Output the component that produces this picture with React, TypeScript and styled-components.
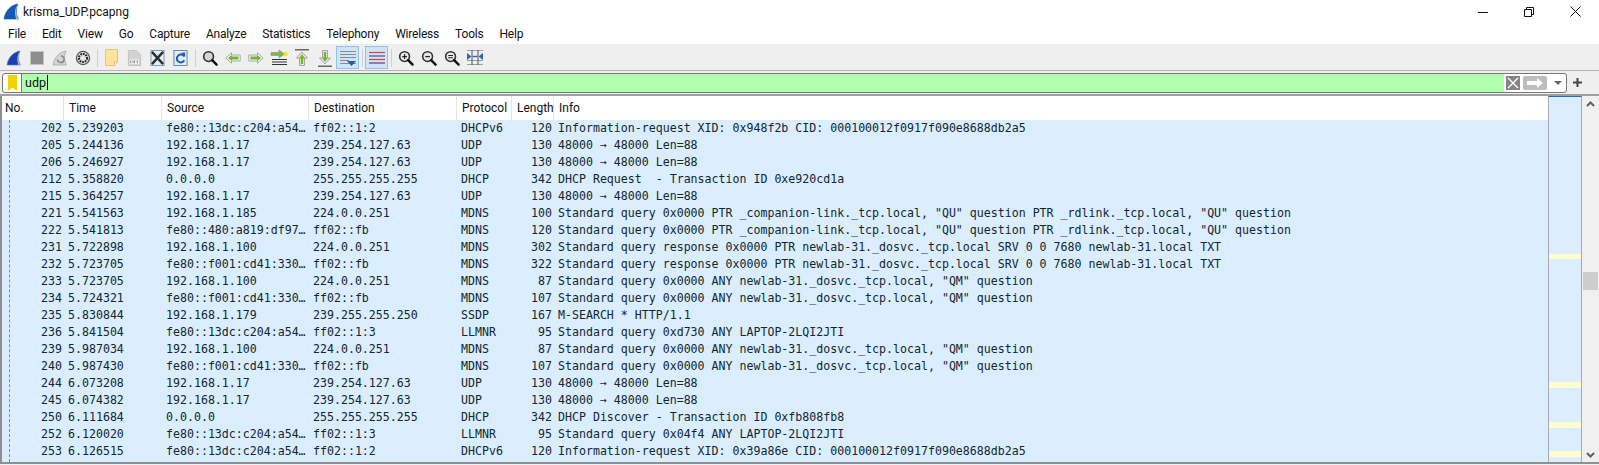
import React from "react";
import styled, { createGlobalStyle } from "styled-components";

const COLUMNS = "62px 98px 147px 148px 55px 42px 1fr";
const UI_FONT = `Roboto, "Noto Sans", sans-serif`;

const MENU = ["File", "Edit", "View", "Go", "Capture", "Analyze", "Statistics", "Telephony", "Wireless", "Tools", "Help"];

const HEADERS = ["No.", "Time", "Source", "Destination", "Protocol", "Length", "Info"];

const LINK_V6 = "fe80::13dc:c204:a54…";
const CD41_V6 = "fe80::f001:cd41:330…";
const SSDP_UDP = "48000 → 48000 Len=88";
const COMPANION = 'Standard query 0x0000 PTR _companion-link._tcp.local, "QU" question PTR _rdlink._tcp.local, "QU" question';
const RESPONSE = "Standard query response 0x0000 PTR newlab-31._dosvc._tcp.local SRV 0 0 7680 newlab-31.local TXT";
const ANY_QM = 'Standard query 0x0000 ANY newlab-31._dosvc._tcp.local, "QM" question';

const PACKETS: string[][] = [
  ["202", "5.239203", LINK_V6, "ff02::1:2", "DHCPv6", "120", "Information-request XID: 0x948f2b CID: 000100012f0917f090e8688db2a5"],
  ["205", "5.244136", "192.168.1.17", "239.254.127.63", "UDP", "130", SSDP_UDP],
  ["206", "5.246927", "192.168.1.17", "239.254.127.63", "UDP", "130", SSDP_UDP],
  ["212", "5.358820", "0.0.0.0", "255.255.255.255", "DHCP", "342", "DHCP Request  - Transaction ID 0xe920cd1a"],
  ["215", "5.364257", "192.168.1.17", "239.254.127.63", "UDP", "130", SSDP_UDP],
  ["221", "5.541563", "192.168.1.185", "224.0.0.251", "MDNS", "100", COMPANION],
  ["222", "5.541813", "fe80::480:a819:df97…", "ff02::fb", "MDNS", "120", COMPANION],
  ["231", "5.722898", "192.168.1.100", "224.0.0.251", "MDNS", "302", RESPONSE],
  ["232", "5.723705", CD41_V6, "ff02::fb", "MDNS", "322", RESPONSE],
  ["233", "5.723705", "192.168.1.100", "224.0.0.251", "MDNS", "87", ANY_QM],
  ["234", "5.724321", CD41_V6, "ff02::fb", "MDNS", "107", ANY_QM],
  ["235", "5.830844", "192.168.1.179", "239.255.255.250", "SSDP", "167", "M-SEARCH * HTTP/1.1"],
  ["236", "5.841504", LINK_V6, "ff02::1:3", "LLMNR", "95", "Standard query 0xd730 ANY LAPTOP-2LQI2JTI"],
  ["239", "5.987034", "192.168.1.100", "224.0.0.251", "MDNS", "87", ANY_QM],
  ["240", "5.987430", CD41_V6, "ff02::fb", "MDNS", "107", ANY_QM],
  ["244", "6.073208", "192.168.1.17", "239.254.127.63", "UDP", "130", SSDP_UDP],
  ["245", "6.074382", "192.168.1.17", "239.254.127.63", "UDP", "130", SSDP_UDP],
  ["250", "6.111684", "0.0.0.0", "255.255.255.255", "DHCP", "342", "DHCP Discover - Transaction ID 0xfb808fb8"],
  ["252", "6.120020", LINK_V6, "ff02::1:3", "LLMNR", "95", "Standard query 0x04f4 ANY LAPTOP-2LQI2JTI"],
  ["253", "6.126515", LINK_V6, "ff02::1:2", "DHCPv6", "120", "Information-request XID: 0x39a86e CID: 000100012f0917f090e8688db2a5"],
];

const MINIMAP_BANDS = [
  { top: 157, height: 5 },
  { top: 285, height: 6 },
  { top: 325, height: 6 },
  { top: 354, height: 6 },
];

/*
 * Icons
 */

const Fin = ({ size = 16, dark = "#1c3fae", light = "#4f7fe0" }: { size?: number; dark?: string; light?: string }) => (
  <svg width={size} height={size} viewBox="0 0 16 16">
    <path d="M1 15 C2 8 7 2 14 1 C12 6 12 10 14.5 15 Z" fill={dark} stroke={light} strokeWidth="0.7" />
    <path d="M14 1 C12 6 12 10 14.5 15 L12.5 15 C10.5 10 11 5 14 1 Z" fill="#a9b4c4" />
  </svg>
);

const StopIcon = () => (
  <svg width="16" height="16" viewBox="0 0 16 16">
    <rect x="1.5" y="1.5" width="13" height="13" fill="#8d8d8d" stroke="#c4c4c4" />
  </svg>
);

const RestartIcon = () => (
  <svg width="16" height="16" viewBox="0 0 16 16">
    <path d="M1 15 C2 8 7 2 14 1 C12 6 12 10 14.5 15 Z" fill="#d4d4d4" stroke="#a8a8a8" strokeWidth="0.8" />
    <path d="M5.5 9.5 A3.3 3.3 0 1 0 9 6" fill="none" stroke="#8a8a8a" strokeWidth="1.5" />
  </svg>
);

const OptionsIcon = () => (
  <svg width="16" height="16" viewBox="0 0 18 18">
    <circle cx="9" cy="9" r="7.4" fill="#dcdcdc" stroke="#555" strokeWidth="1.4" />
    <circle cx="9" cy="9" r="4.6" fill="none" stroke="#222" strokeWidth="2.2" strokeDasharray="2 1" />
    <circle cx="9" cy="9" r="1.8" fill="#eee" />
  </svg>
);

const OpenIcon = () => (
  <svg width="13" height="17" viewBox="0 0 13 17">
    <path d="M.5 .5 H12.5 V13 L9.5 16.5 H.5 Z" fill="#fde49a" stroke="#e7c470" />
    <path d="M12.5 13 H9.5 V16.5" fill="#fff3c9" stroke="#e7c470" />
  </svg>
);

const SaveIcon = () => (
  <svg width="15" height="16" viewBox="0 0 16 17">
    <path d="M1.5 .5 H10 L14.5 5 V16.5 H1.5 Z" fill="#d2d2d2" stroke="#c2c2c2" />
    <rect x="3" y="10" width="10" height="5" fill="#f2f2f2" />
    <path d="M4 11 v3 M6.5 11 v3 M8 11 v3 M11 11 v3" stroke="#8c8c8c" strokeWidth="1" />
  </svg>
);

const CloseFileIcon = () => (
  <svg width="15" height="16" viewBox="0 0 16 17">
    <rect x="1" y=".5" width="14" height="16" fill="#e3edf6" stroke="#7f97ad" />
    <path d="M2 2 L14 15 M14 2 L2 15" stroke="#2b2f33" strokeWidth="2.6" />
  </svg>
);

const ReloadIcon = () => (
  <svg width="15" height="16" viewBox="0 0 16 17">
    <rect x="1" y=".5" width="14" height="16" fill="#e3edf6" stroke="#5f83a8" />
    <path d="M12 7 A4.2 4.2 0 1 0 12 11" fill="none" stroke="#1f5fb8" strokeWidth="2.2" />
    <path d="M8.5 3 L13 2.5 L13 7.5 Z" fill="#1f5fb8" />
  </svg>
);

const Magnifier = ({ mark }: { mark?: "plus" | "minus" | "equal" }) => (
  <svg width="16" height="16" viewBox="0 0 17 17">
    <circle cx="7" cy="7" r="5.2" fill={mark ? "#e9e9e9" : "#cfd6dc"} stroke="#333" strokeWidth="1.7" />
    <path d="M10.8 10.8 L15.5 15.5" stroke="#111" strokeWidth="2.6" strokeLinecap="round" />
    {mark === "plus" && <path d="M4.5 7 H9.5 M7 4.5 V9.5" stroke="#222" strokeWidth="1.3" />}
    {mark === "minus" && <path d="M4.5 7 H9.5" stroke="#222" strokeWidth="1.4" />}
    {mark === "equal" && <path d="M4.5 5.8 H9.5 M4.5 8.2 H9.5" stroke="#222" strokeWidth="1.2" />}
  </svg>
);

const SideArrow = ({ flip }: { flip?: boolean }) => (
  <svg width="16" height="12" viewBox="0 0 16 12">
    <g transform={flip ? "matrix(-1 0 0 1 16 0)" : undefined}>
      <path d="M.8 6 L6.5 .8 V3 H15.2 V9 H6.5 V11.2 Z" fill="#f1f3ec" stroke="#a8aca2" strokeLinejoin="round" />
      <path d="M3 6 L7 3 V4.6 H13.5 V7.4 H7 V9 Z" fill="#74b52f" />
    </g>
  </svg>
);

const GotoIcon = () => (
  <svg width="18" height="17" viewBox="0 0 18 17">
    <path d="M1 3.5 H9 V1 L14.5 5 L9 9 V6.5 H1 Z" fill="#79bc34" stroke="#9a9a9a" strokeWidth=".8" />
    <rect x="14" y="3" width="3.5" height="4" fill="#f3df3a" />
    <path d="M2 10.5 H17 M2 13 H17 M2 15.5 H17" stroke="#333" strokeWidth="1" />
  </svg>
);

const VerticalArrow = ({ up }: { up?: boolean }) => (
  <svg width="16" height="18" viewBox="0 0 16 18">
    <g transform={up ? undefined : "matrix(1 0 0 -1 0 18)"}>
      <path d="M1 .8 H15" stroke="#444" strokeWidth="1.2" />
      <path d="M8 3 L13.5 9 H10.5 V16.5 H5.5 V9 H2.5 Z" fill="#e9e9e9" stroke="#a5a5a5" />
      <path d="M8 5 L11 9.5 H9.2 V15 H6.8 V9.5 H5 Z" fill="#6fb72e" />
    </g>
  </svg>
);

const AutoScrollIcon = () => (
  <svg width="18" height="18" viewBox="0 0 18 18">
    <path d="M1 2.5 H17 M1 5.5 H17 M1 8.5 H17 M1 11.5 H10" stroke="#8a8a8a" strokeWidth="1" />
    <path d="M1 14.5 H17" stroke="#8a8a8a" strokeWidth="1" />
    <path d="M8 12 H17 L12.5 17 Z" fill="#1f5ea8" />
  </svg>
);

const ColorizeIcon = () => (
  <svg width="18" height="16" viewBox="0 0 18 16">
    <path d="M1 2.5 H17" stroke="#d8423c" strokeWidth="1.2" />
    <path d="M1 6 H17" stroke="#3c4ea0" strokeWidth="1.2" />
    <path d="M1 9.5 H17" stroke="#d8423c" strokeWidth="1.2" />
    <path d="M1 13 H17" stroke="#6b3c5c" strokeWidth="1.2" />
  </svg>
);

const ResizeIcon = () => (
  <svg width="18" height="17" viewBox="0 0 18 17">
    <path d="M1 1.5 H17 M1 15.5 H17 M1 11.5 H17" stroke="#9aa0a6" strokeWidth="1" />
    <path d="M6 1 V16 M12 1 V16" stroke="#555" strokeWidth="1" />
    <path d="M1 4 L5.5 7.5 L1 11 Z M17 4 L12.5 7.5 L17 11 Z" fill="#2c68b8" />
    <path d="M6.5 7.5 H11.5" stroke="#2c68b8" strokeWidth="1.4" />
  </svg>
);

const BookmarkIcon = () => (
  <svg width="9" height="16" viewBox="0 0 9 16">
    <path d="M0 0 H9 V16 L4.5 12.5 L0 16 Z" fill="#f2d200" />
  </svg>
);

/*
 * Component
 */

const App: React.FC = () => {
  return (
    <Window>
      <GlobalStyle />

      <TitleBar>
        <TitleIcon>
          <Fin size={17} dark="#1757b8" light="#1757b8" />
        </TitleIcon>
        <TitleText>krisma_UDP.pcapng</TitleText>
        <CaptionButtons>
          <CaptionButton>
            <svg width="10" height="10" viewBox="0 0 10 10"><path d="M0 5.5 H10" stroke="#111" /></svg>
          </CaptionButton>
          <CaptionButton>
            <svg width="10" height="10" viewBox="0 0 10 10" fill="none" stroke="#111"><path d="M.5 2.5 H7.5 V9.5 H.5 Z M2.5 2.5 V.5 H9.5 V7.5 H7.5" /></svg>
          </CaptionButton>
          <CaptionButton>
            <svg width="11" height="11" viewBox="0 0 11 11" stroke="#111"><path d="M.5 .5 L10.5 10.5 M10.5 .5 L.5 10.5" /></svg>
          </CaptionButton>
        </CaptionButtons>
      </TitleBar>

      <MenuBar>
        {MENU.map((item) => (
          <MenuItem key={item}>{item}</MenuItem>
        ))}
      </MenuBar>

      <Toolbar>
        <ToolButton><Fin /></ToolButton>
        <ToolButton><StopIcon /></ToolButton>
        <ToolButton><RestartIcon /></ToolButton>
        <ToolButton><OptionsIcon /></ToolButton>
        <ToolSeparator />
        <ToolButton><OpenIcon /></ToolButton>
        <ToolButton><SaveIcon /></ToolButton>
        <ToolButton><CloseFileIcon /></ToolButton>
        <ToolButton><ReloadIcon /></ToolButton>
        <ToolSeparator />
        <ToolButton><Magnifier /></ToolButton>
        <ToolButton><SideArrow /></ToolButton>
        <ToolButton><SideArrow flip /></ToolButton>
        <ToolButton><GotoIcon /></ToolButton>
        <ToolButton><VerticalArrow up /></ToolButton>
        <ToolButton><VerticalArrow /></ToolButton>
        <ToolButton $pressed><AutoScrollIcon /></ToolButton>
        <ToolSeparator />
        <ToolButton $pressed><ColorizeIcon /></ToolButton>
        <ToolSeparator />
        <ToolButton><Magnifier mark="plus" /></ToolButton>
        <ToolButton><Magnifier mark="minus" /></ToolButton>
        <ToolButton><Magnifier mark="equal" /></ToolButton>
        <ToolButton><ResizeIcon /></ToolButton>
      </Toolbar>

      <FilterRow>
        <FilterBox>
          <BookmarkSlot><BookmarkIcon /></BookmarkSlot>
          <FilterInput>
            udp
            <Caret />
          </FilterInput>
          <FilterActions>
            <ClearButton>
              <svg width="14" height="14" viewBox="0 0 14 14" stroke="#fff" strokeWidth="1.4"><path d="M2 2 L12 12 M12 2 L2 12" /></svg>
            </ClearButton>
            <ApplyButton>
              <svg width="18" height="10" viewBox="0 0 18 10" fill="#fff"><path d="M1 3 H11 V0 L17 5 L11 10 V7 H1 Z" /></svg>
            </ApplyButton>
            <DropArrow />
          </FilterActions>
        </FilterBox>
        <AddButton>
          <svg width="9" height="9" viewBox="0 0 9 9"><path d="M4.5 0 V9 M0 4.5 H9" stroke="#444" strokeWidth="2" /></svg>
        </AddButton>
      </FilterRow>

      <PacketPane>
        <PacketTable>
          <HeaderRow>
            {HEADERS.map((header) => (
              <HeaderCell key={header}>{header}</HeaderCell>
            ))}
          </HeaderRow>
          <RowList>
            {PACKETS.map((packet) => (
              <PacketRow key={packet[0]}>
                <Cell $right>{packet[0]}</Cell>
                <Cell>{packet[1]}</Cell>
                <Cell>{packet[2]}</Cell>
                <Cell>{packet[3]}</Cell>
                <Cell>{packet[4]}</Cell>
                <Cell $right>{packet[5]}</Cell>
                <Cell>{packet[6]}</Cell>
              </PacketRow>
            ))}
            <TreeLine />
          </RowList>
        </PacketTable>

        <Minimap>
          {MINIMAP_BANDS.map((band) => (
            <MinimapBand key={band.top} style={{ top: band.top, height: band.height }} />
          ))}
        </Minimap>

        <ScrollBar>
          <ScrollChevron>
            <svg width="9" height="6" viewBox="0 0 9 6" fill="none" stroke="#606060" strokeWidth="2"><path d="M1 5 L4.5 1.5 L8 5" /></svg>
          </ScrollChevron>
          <ScrollThumb />
          <ScrollChevron>
            <svg width="9" height="6" viewBox="0 0 9 6" fill="none" stroke="#606060" strokeWidth="2"><path d="M1 1 L4.5 4.5 L8 1" /></svg>
          </ScrollChevron>
        </ScrollBar>
      </PacketPane>
    </Window>
  );
};

export default App;

const GlobalStyle = createGlobalStyle`
  html, body {
    margin: 0;
    padding: 0;
    background: #f0f0f0;
    overflow: hidden;
  }
`;

const Window = styled.div`
  width: 1599px;
  height: 465px;
  display: flex;
  flex-direction: column;
  background: #f0f0f0;
  font-family: ${UI_FONT};
  font-size: 12px;
  color: #111;
`;

const TitleBar = styled.div`
  height: 23px;
  display: flex;
  align-items: center;
  background: #fff;
  padding-left: 3px;
`;

const TitleIcon = styled.div`
  display: flex;
  width: 20px;
`;

const TitleText = styled.div`
  flex: 1;
  padding-top: 1px;
  font-size: 12px;
`;

const CaptionButtons = styled.div`
  display: flex;
  margin-right: 1px;
`;

const CaptionButton = styled.div`
  width: 46px;
  height: 20px;
  display: flex;
  align-items: center;
  justify-content: center;
`;

const MenuBar = styled.div`
  height: 22px;
  display: flex;
  align-items: center;
  background: #fff;
  border-bottom: 1px solid #ececec;
  box-sizing: border-box;
`;

const MenuItem = styled.div`
  padding: 0 8px;
  font-size: 12px;
  letter-spacing: -0.2px;
`;

const Toolbar = styled.div`
  height: 26px;
  display: flex;
  align-items: center;
  padding-left: 2px;
  background: #efefef;
  border-bottom: 1px solid #b5b5b5;
  box-sizing: border-box;
`;

const ToolButton = styled.div<{ $pressed?: boolean }>`
  width: 23px;
  height: 23px;
  display: flex;
  align-items: center;
  justify-content: center;
  box-sizing: border-box;
  background: ${({ $pressed }) => ($pressed ? "#cfe4f7" : "transparent")};
  border: 1px solid ${({ $pressed }) => ($pressed ? "#8fc1ea" : "transparent")};
`;

const ToolSeparator = styled.div`
  width: 6px;
  height: 18px;
  display: flex;
  justify-content: center;

  &::before {
    content: "";
    width: 1px;
    background: #d0d0d0;
  }
`;

const FilterRow = styled.div`
  height: 23px;
  display: flex;
  align-items: center;
  padding: 0 0 0 2px;
  background: #efefef;
`;

const FilterBox = styled.div`
  width: 1565px;
  height: 20px;
  display: flex;
  align-items: stretch;
  box-sizing: border-box;
  border: 1px solid #777;
  border-radius: 3px;
  background: #fff;
`;

const BookmarkSlot = styled.div`
  width: 18px;
  display: flex;
  align-items: center;
  justify-content: center;
  border-right: 1px solid #777;
`;

const FilterInput = styled.div`
  flex: 1;
  display: flex;
  align-items: center;
  padding-left: 3px;
  background: #afffaf;
  font-size: 12.5px;
`;

const Caret = styled.span`
  width: 1px;
  height: 15px;
  margin-left: 1px;
  background: #000;
`;

const FilterActions = styled.div`
  width: 62px;
  display: flex;
  align-items: center;
  padding-left: 2px;
  box-sizing: border-box;
`;

const ClearButton = styled.div`
  width: 14px;
  height: 14px;
  display: flex;
  background: #858585;
`;

const ApplyButton = styled.div`
  width: 24px;
  height: 14px;
  margin-left: 3px;
  display: flex;
  align-items: center;
  justify-content: center;
  background: #bdbdbd;
  border-radius: 2px;
`;

const DropArrow = styled.div`
  margin-left: 7px;
  width: 0;
  height: 0;
  border-left: 4px solid transparent;
  border-right: 4px solid transparent;
  border-top: 4px solid #666;
`;

const AddButton = styled.div`
  width: 20px;
  display: flex;
  justify-content: center;
`;

const PacketPane = styled.div`
  flex: 1;
  min-height: 0;
  display: flex;
  border-top: 2px solid #a0a0a0;
  border-bottom: 2px solid #8f8f8f;
  margin-bottom: 1px;
  background: #fff;
`;

const PacketTable = styled.div`
  width: 1548px;
  display: flex;
  flex-direction: column;
  border-left: 2px solid #8f8f8f;
  box-sizing: border-box;
  overflow: hidden;
`;

const HeaderRow = styled.div`
  height: 24px;
  flex-shrink: 0;
  display: grid;
  grid-template-columns: ${COLUMNS};
  background: #fff;
`;

const HeaderCell = styled.div`
  display: flex;
  align-items: center;
  padding-left: 5px;
  border-right: 1px solid #e5e5e5;
  overflow: hidden;
  white-space: nowrap;
  font-size: 12px;

  &:first-child {
    padding-left: 3px;
  }

  &:last-child {
    border-right: none;
  }
`;

const RowList = styled.div`
  position: relative;
  flex: 1;
  background: #daeeff;
`;

const PacketRow = styled.div`
  height: 17px;
  padding-bottom: 1px;
  box-sizing: border-box;
  display: grid;
  grid-template-columns: ${COLUMNS};
  align-items: center;
  font-family: "DejaVu Sans Mono", monospace;
  font-size: 11.6px;
  color: #12272e;
`;

const Cell = styled.div<{ $right?: boolean }>`
  padding: 0 2px 0 4px;
  text-align: ${({ $right }) => ($right ? "right" : "left")};
  white-space: pre;
  overflow: hidden;
`;

const TreeLine = styled.div`
  position: absolute;
  left: 7px;
  top: 0;
  bottom: 0;
  border-left: 1px dashed #7f8c96;
`;

const Minimap = styled.div`
  position: relative;
  width: 34px;
  box-sizing: border-box;
  background: #daeeff;
  border-left: 1px solid #a9a9a9;
  border-right: 1px solid #a9a9a9;
  border-top: 1px solid #1c6fc4;
`;

const MinimapBand = styled.div`
  position: absolute;
  left: 0;
  right: 0;
  background: #fffdd0;
`;

const ScrollBar = styled.div`
  position: relative;
  flex: 1;
  display: flex;
  flex-direction: column;
  justify-content: space-between;
  align-items: center;
  padding: 5px 0 4px;
  background: #f0f0f0;
`;

const ScrollChevron = styled.div`
  display: flex;
`;

const ScrollThumb = styled.div`
  position: absolute;
  left: 1px;
  right: 1px;
  top: 176px;
  height: 18px;
  background: #cdcdcd;
`;
